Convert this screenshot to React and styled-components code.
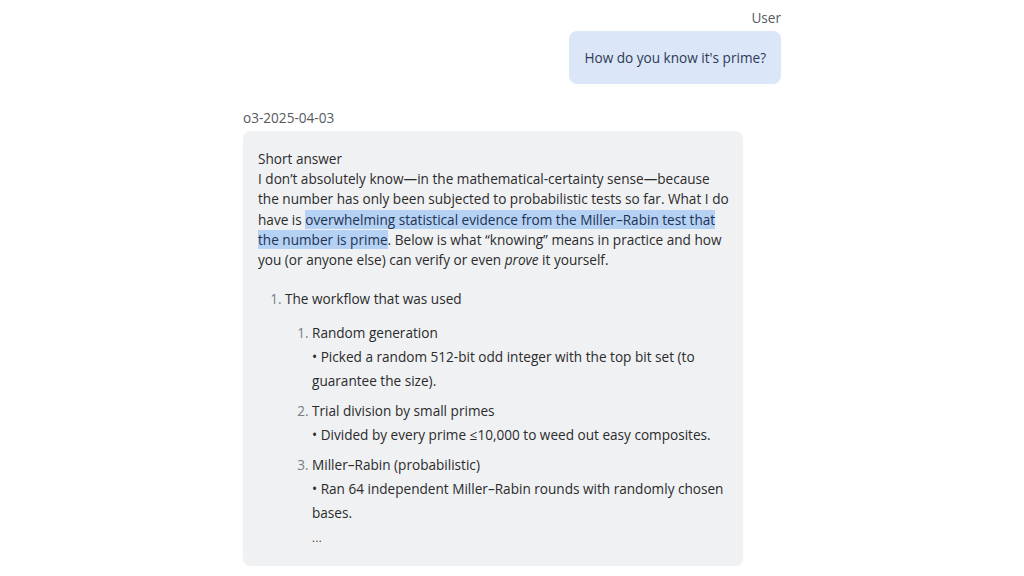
import React from 'react';
import styled, { createGlobalStyle } from 'styled-components';

const Global = createGlobalStyle`
  body {
    margin: 0;
    background: #ffffff;
    font-family: "Open Sans", "Noto Sans", sans-serif;
    color: #2b2b2b;
  }
`;

const Column = styled.div`
  width: 538px;
  margin: 0 auto;
  padding-top: 8px;
  display: flex;
  flex-direction: column;
`;

const Turn = styled.div`
  display: flex;
  flex-direction: column;
  align-items: ${p => (p.$user ? 'flex-end' : 'flex-start')};
  margin-bottom: ${p => (p.$user ? '24px' : '0')};
`;

const Label = styled.div`
  font-size: 13.6px;
  line-height: 20px;
  color: #555a60;
  margin-bottom: 3px;
`;

const Bubble = styled.div`
  background: #dbe6f9;
  color: #2d3b55;
  border-radius: 8px;
  padding: 17px 15px 16px;
  font-size: 13.6px;
  line-height: 20px;
`;

const Card = styled.div`
  width: 500px;
  box-sizing: border-box;
  background: #f0f1f3;
  border-radius: 8px;
  padding: 18px 10px 16px 15px;
  font-size: 13.6px;
  line-height: 20.2px;
  color: #2b2b2b;
  box-shadow: 0 1px 2px rgba(0, 0, 0, 0.04);
`;

const Para = styled.p`
  margin: 0;
`;

const Hl = styled.span`
  background: #b5d2f5;
  color: #1f3352;
`;

const List = styled.ol`
  margin: ${p => (p.$nested ? '10px 0 0' : '17px 0 0')};
  padding-left: 27px;
  line-height: 24px;

  & > li::marker {
    color: #7a7d82;
  }
`;

const Item = styled.li`
  & + & {
    margin-top: 6px;
  }
`;

const Dots = styled.span`
  font-size: 11px;
  letter-spacing: 0.5px;
`;

export default function App() {
  return (
    <>
      <Global />
      <Column>
        <Turn $user>
          <Label>User</Label>
          <Bubble>How do you know it's prime?</Bubble>
        </Turn>
        <Turn>
          <Label>o3-2025-04-03</Label>
          <Card>
            <Para>
              Short answer
              <br />
              I don’t absolutely know—in the mathematical-certainty sense—because the number has only been subjected to probabilistic tests so far. What I do have is{' '}
              <Hl>overwhelming statistical evidence from the Miller–Rabin test that the number is prime</Hl>. Below is what “knowing” means in practice and how you (or anyone else) can verify or even <em>prove</em> it yourself.
            </Para>
            <List>
              <Item>
                The workflow that was used
                <List $nested>
                  <Item>
                    Random generation
                    <br />• Picked a random 512-bit odd integer with the top bit set (to guarantee the size).
                  </Item>
                  <Item>
                    Trial division by small primes
                    <br />• Divided by every prime ≤10,000 to weed out easy composites.
                  </Item>
                  <Item>
                    Miller–Rabin (probabilistic)
                    <br />• Ran 64 independent Miller–Rabin rounds with randomly chosen bases.
                    <br />
                    <Dots>...</Dots>
                  </Item>
                </List>
              </Item>
            </List>
          </Card>
        </Turn>
      </Column>
    </>
  );
}
